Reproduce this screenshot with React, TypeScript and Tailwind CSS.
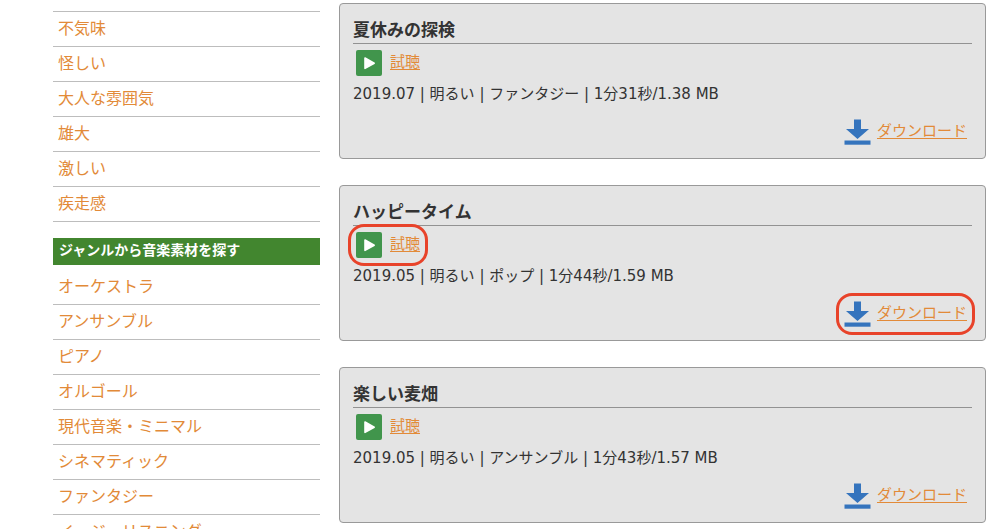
const moods = ["不気味", "怪しい", "大人な雰囲気", "雄大", "激しい", "疾走感"]

const genres = [
  "オーケストラ",
  "アンサンブル",
  "ピアノ",
  "オルゴール",
  "現代音楽・ミニマル",
  "シネマティック",
  "ファンタジー",
  "イージーリスニング",
]

type Track = {
  title: string
  meta: string
  marked?: boolean
}

const tracks: Track[] = [
  { title: "夏休みの探検", meta: "2019.07 | 明るい | ファンタジー | 1分31秒/1.38 MB" },
  { title: "ハッピータイム", meta: "2019.05 | 明るい | ポップ | 1分44秒/1.59 MB", marked: true },
  { title: "楽しい麦畑", meta: "2019.05 | 明るい | アンサンブル | 1分43秒/1.57 MB" },
]

function PlayIcon() {
  return (
    <svg width="26" height="26" viewBox="0 0 26 26" aria-hidden="true">
      <rect width="26" height="26" rx="2" fill="#41954c" />
      <path d="M9 8L18.2 13.2L9 18.4Z" fill="#fff" stroke="#fff" strokeWidth="1.6" strokeLinejoin="round" />
    </svg>
  )
}

function DownloadIcon() {
  return (
    <svg width="27" height="26" viewBox="0 0 27 26" fill="#3574bd" aria-hidden="true">
      <path d="M10 0.5H17V10H25L13.5 20L2 10H10Z" />
      <rect x="0.5" y="21.5" width="26" height="4.2" />
    </svg>
  )
}

function Marker() {
  return <span className="pointer-events-none absolute -inset-2 rounded-2xl border-3 border-[#e8432a]" />
}

function LinkList({ items }: { items: string[] }) {
  return (
    <ul>
      {items.map((item) => (
        <li key={item} className="border-b border-[#bdbdbd]">
          <a href="#" className="block px-[5px] pt-1 pb-1.5 text-base/6 text-[#e28a38]">
            {item}
          </a>
        </li>
      ))}
    </ul>
  )
}

function TrackCard({ title, meta, marked }: Track) {
  return (
    <article className="rounded border border-[#999] bg-[#e4e4e4] px-[13px] pt-3.5 pb-[13px]">
      <h2 className="border-b border-[#929292] pb-px text-[17px]/6 font-bold">{title}</h2>
      <div className="flex px-[3px] pt-1.5">
        <a href="#" className="relative flex gap-2 text-[15px]/6 text-[#e28a38] underline underline-offset-2">
          <PlayIcon />
          試聴
          {marked && <Marker />}
        </a>
      </div>
      <p className="pt-1.5 font-['DejaVu_Sans','Noto_Sans_CJK_JP',sans-serif] text-[15px]/6">{meta}</p>
      <div className="flex justify-end px-[5px] pt-[13px]">
        <a href="#" className="relative flex gap-1.5 text-[15px]/6 text-[#e28a38] underline underline-offset-2">
          <DownloadIcon />
          ダウンロード
          {marked && <Marker />}
        </a>
      </div>
    </article>
  )
}

export default function App() {
  return (
    <div className="flex h-screen gap-[19px] overflow-hidden bg-white pr-3.5 pl-[53px] font-[Inter,'Noto_Sans_CJK_JP',sans-serif] text-[#333]">
      <aside className="w-[267px] shrink-0 pt-[11px]">
        <div className="border-t border-[#bdbdbd]">
          <LinkList items={moods} />
        </div>
        <h2 className="mt-4 mb-[5px] bg-[#42862f] px-1.5 pb-[3px] text-sm/6 font-bold text-white">
          ジャンルから音楽素材を探す
        </h2>
        <LinkList items={genres} />
      </aside>
      <main className="flex min-w-0 flex-1 flex-col gap-[26px] pt-[3px]">
        {tracks.map((track) => (
          <TrackCard key={track.title} {...track} />
        ))}
      </main>
    </div>
  )
}
